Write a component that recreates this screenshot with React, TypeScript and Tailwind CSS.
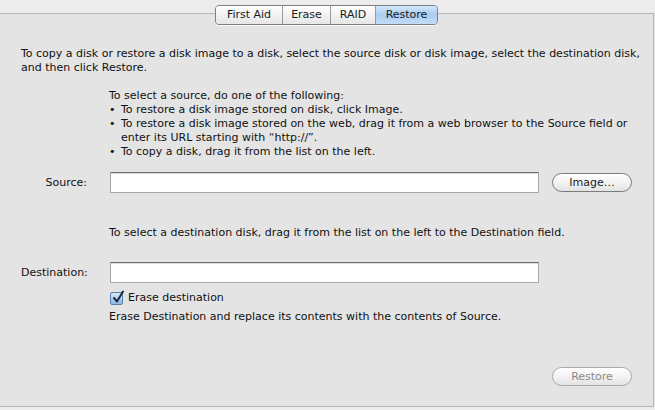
import React from 'react';

const font = { fontFamily: '"DejaVu Sans", "Liberation Sans", sans-serif' };

function Tabs() {
  const tabs = ['First Aid', 'Erase', 'RAID', 'Restore'];
  return (
    <div className="absolute left-[215px] top-[5px] flex h-[20px] rounded-[4px] border border-[#7f7f7f] overflow-hidden shadow-[0_1px_0_rgba(255,255,255,0.7)]">
      {tabs.map((t, i) => (
        <div
          key={t}
          className={
            'flex items-center justify-center text-[11px] text-[#1a1a1a] ' +
            (i > 0 ? 'border-l border-[#9a9a9a] ' : '') +
            (t === 'Restore'
              ? 'bg-gradient-to-b from-[#d3e6fa] via-[#a9cdf2] to-[#c4dcf6] w-[62px]'
              : 'bg-gradient-to-b from-[#ffffff] via-[#f2f2f2] to-[#e6e6e6] ' +
                (t === 'First Aid' ? 'w-[66px]' : t === 'Erase' ? 'w-[48px]' : 'w-[45px]'))
          }
        >
          {t}
        </div>
      ))}
    </div>
  );
}

function Field() {
  return (
    <div className="h-[21px] w-[429px] bg-white border border-[#a8a8a8] border-t-[#6e6e6e] shadow-[inset_0_1px_1px_rgba(0,0,0,0.15)]" />
  );
}

function PillButton({ label, disabled }: { label: string; disabled?: boolean }) {
  return (
    <div
      className={
        'h-[19px] w-[80px] rounded-full border flex items-center justify-center text-[11px] bg-gradient-to-b from-[#ffffff] via-[#f3f3f3] to-[#e3e3e3] ' +
        (disabled ? 'border-[#a9a9a9] text-[#8a8a8a]' : 'border-[#7c7c7c] text-[#1a1a1a]')
      }
    >
      {label}
    </div>
  );
}

export default function App() {
  return (
    <div className="relative w-[655px] h-[410px] bg-[#ececec] overflow-hidden" style={font}>
      <div className="ml-0 mt-[13px] w-[654px] h-[394px] bg-[#e4e4e4] border-t border-r border-b border-[#b5b5b5] pt-[33px] pl-[21px] text-[11px] leading-[14px] text-[#111]">
        <p>
          To copy a disk or restore a disk image to a disk, select the source disk or disk image, select the destination disk,
          <br />
          and then click Restore.
        </p>

        <div className="ml-[88px] mt-[14px]">
          <p>To select a source, do one of the following:</p>
          <ul>
            <li className="flex">
              <span className="w-[12px]">•</span>
              <span>To restore a disk image stored on disk, click Image.</span>
            </li>
            <li className="flex">
              <span className="w-[12px] shrink-0">•</span>
              <span>
                To restore a disk image stored on the web, drag it from a web browser to the Source field or
                <br />
                enter its URL starting with “http://”.
              </span>
            </li>
            <li className="flex">
              <span className="w-[12px]">•</span>
              <span>To copy a disk, drag it from the list on the left.</span>
            </li>
          </ul>
        </div>

        <div className="mt-[13px] flex items-center">
          <span className="w-[66px] text-right">Source:</span>
          <div className="ml-[23px]">
            <Field />
          </div>
          <div className="ml-[13px]">
            <PillButton label="Image…" />
          </div>
        </div>

        <p className="ml-[88px] mt-[33px]">
          To select a destination disk, drag it from the list on the left to the Destination field.
        </p>

        <div className="mt-[22px] flex items-center">
          <span className="w-[66px] text-right">Destination:</span>
          <div className="ml-[23px]">
            <Field />
          </div>
        </div>

        <div className="ml-[89px] mt-[8px] flex items-center gap-[5px]">
          <div className="relative w-[13px] h-[13px] rounded-[2px] border border-[#5b7fa8] bg-gradient-to-b from-[#d9eafb] to-[#8db8e6]">
            <svg className="absolute -top-[3px] left-[1px]" width="13" height="14" viewBox="0 0 13 14">
              <path d="M2 8 L5 11.5 L11 1.5" fill="none" stroke="#1d2a3a" strokeWidth="2" strokeLinecap="round" strokeLinejoin="round" />
            </svg>
          </div>
          <span>Erase destination</span>
        </div>

        <p className="ml-[88px] mt-[5px]">
          Erase Destination and replace its contents with the contents of Source.
        </p>

        <div className="mt-[43px] ml-[531px]">
          <PillButton label="Restore" disabled />
        </div>
      </div>
      <Tabs />
    </div>
  );
}
